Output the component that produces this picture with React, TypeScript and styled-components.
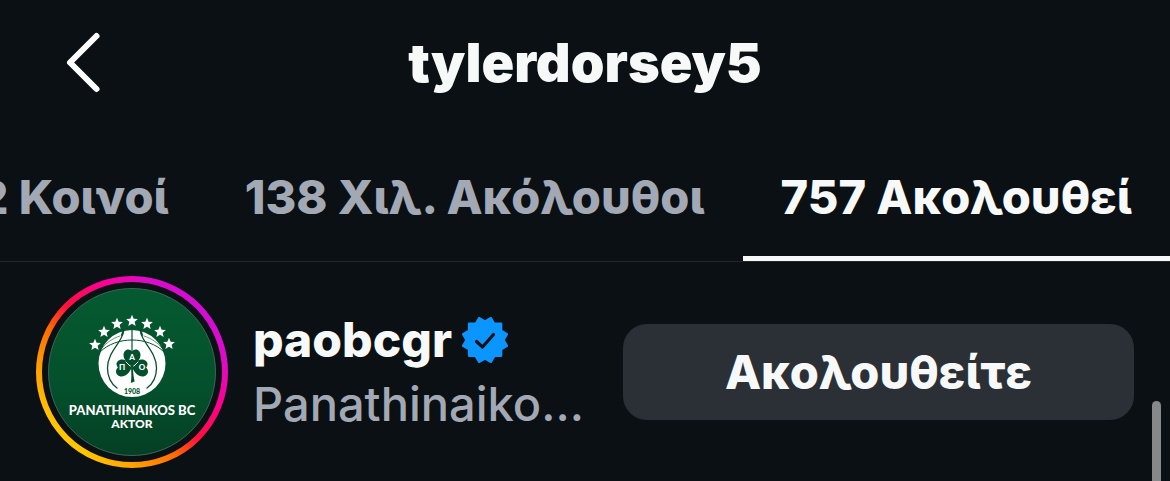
import React from "react";
import styled, { createGlobalStyle } from "styled-components";

const GlobalStyle = createGlobalStyle`
  *, *::before, *::after { box-sizing: border-box; }
  body {
    margin: 0;
    background: #0b1014;
    color: #f7f9f9;
    font-family: Inter, "Noto Sans", sans-serif;
    overflow: hidden;
  }
  button { font: inherit; color: inherit; border: 0; background: none; padding: 0; cursor: pointer; }
`;

const Screen = styled.main`
  position: relative;
  min-height: 100vh;
`;

const Header = styled.header`
  display: grid;
  grid-template-columns: 1fr auto 1fr;
  align-items: center;
  height: 126px;
  padding: 0 52px;
`;

const BackButton = styled.button`
  display: flex;
  width: 64px;
  height: 64px;
`;

const Title = styled.h1`
  margin: 0;
  font-size: 54px;
  line-height: 64px;
  font-weight: 900;
`;

const Tabs = styled.nav`
  display: flex;
  justify-content: flex-end;
  height: 136px;
  overflow: hidden;
  border-bottom: 1px solid #23272b;
`;

const Tab = styled.button<{ $active?: boolean }>`
  flex: none;
  height: 135px;
  padding: 12px 38px 0;
  border-bottom: 5px solid ${(p) => (p.$active ? "#f7f9f9" : "transparent")};
  color: ${(p) => (p.$active ? "#f7f9f9" : "#a2a9b4")};
  font-size: 47px;
  line-height: 56px;
  font-weight: 800;
  white-space: nowrap;
`;

const AccountRow = styled.article`
  display: flex;
  align-items: center;
  padding: 14px 36px 12px;
`;

const AvatarLink = styled.a`
  display: block;
  flex: none;
  width: 192px;
  height: 192px;
`;

const Info = styled.div`
  flex: 1;
  min-width: 0;
  padding: 0 36px 0 25px;
`;

const NameLine = styled.div`
  display: flex;
  align-items: center;
  gap: 10px;
`;

const Username = styled.a`
  color: inherit;
  text-decoration: none;
  font-size: 48px;
  line-height: 64px;
  font-weight: 800;
`;

const FullName = styled.p`
  margin: 0;
  color: #a2a9b4;
  font-size: 47px;
  line-height: 64px;
  font-weight: 500;
  overflow: hidden;
  white-space: nowrap;
`;

const FollowButton = styled.button`
  flex: 0 1 511px;
  height: 96px;
  padding-bottom: 2px;
  border-radius: 24px;
  background: #2b2f36;
  font-size: 47px;
  font-weight: 800;
`;

const ScrollThumb = styled.div`
  position: absolute;
  right: 9px;
  top: 401px;
  bottom: 0;
  width: 9px;
  border-radius: 5px 5px 0 0;
  background: #87888a;
`;

function starPoints(cx: number, cy: number, outer: number, inner: number) {
  return Array.from({ length: 10 }, (_, i) => {
    const r = i % 2 ? inner : outer;
    const a = (Math.PI * i) / 5 - Math.PI / 2;
    return `${(cx + r * Math.cos(a)).toFixed(2)},${(cy + r * Math.sin(a)).toFixed(2)}`;
  }).join(" ");
}

const stars = [[59, 69], [68, 56], [81, 48], [96, 45], [111, 48], [124, 56], [133, 68]];

function ClubAvatar() {
  return (
    <svg width="192" height="192" viewBox="0 0 192 192" role="img" aria-label="paobcgr">
      <defs>
        <linearGradient id="ring" x1="0.12" y1="0.88" x2="0.88" y2="0.12">
          <stop offset="0" stopColor="#ffd000" />
          <stop offset="0.22" stopColor="#ff9500" />
          <stop offset="0.36" stopColor="#ff6a00" />
          <stop offset="0.5" stopColor="#ff0f3c" />
          <stop offset="0.7" stopColor="#ff0090" />
          <stop offset="0.88" stopColor="#dc0cc8" />
          <stop offset="1" stopColor="#d20cd6" />
        </linearGradient>
        <linearGradient id="field" x1="0" y1="0" x2="0" y2="1">
          <stop offset="0" stopColor="#055a31" />
          <stop offset="0.6" stopColor="#04502c" />
          <stop offset="1" stopColor="#043f24" />
        </linearGradient>
      </defs>
      <circle cx="96" cy="96" r="93" fill="none" stroke="url(#ring)" strokeWidth="6" />
      <circle cx="96" cy="96" r="83.5" fill="url(#field)" stroke="#3c6650" strokeWidth="1" />
      {stars.map(([x, y]) => (
        <polygon key={x} points={starPoints(x, y, 6.2, 2.8)} fill="#fff" />
      ))}
      <circle cx="96" cy="87.5" r="33.5" fill="#fff" />
      <g fill="none" stroke="#04502c" strokeLinecap="round">
        <path d="M96 53.500V76" strokeWidth="1.200" />
        <path d="M87 57C86 66 71.500 76 71.500 92c0 9 4 16 9.500 20" strokeWidth="1.300" />
        <path d="M105 57c1 9 15.500 19 15.500 35 0 9-4 16-9.500 20" strokeWidth="1.300" />
        <path d="M87.500 54.500 86 59M104.500 54.500 106 59" strokeWidth="2" />
        <path d="M64 76c8-8 20-12 32-12s24 4 32 12" strokeWidth="1" />
        <path d="M84 60c-7 2-14 7-18 12M108 60c7 2 14 7 18 12" strokeWidth=".6" />
      </g>
      <g fill="#04502c">
        <path d="M96 91c-4-4-8.500-7-8.500-12 0-3 2-5.500 4.700-5.500 1.600 0 2.900.7 3.800 2 .9-1.300 2.200-2 3.800-2 2.700 0 4.700 2.500 4.700 5.500C104.500 84 100 87 96 91Z" />
        <path d="M95.500 92c-2-4.500-4.500-8.500-9-8.500-3.200 0-6 2-6 4.500 0 1.300.500 2.500 1.500 3.500-1.200 1-2 2.300-2 4 0 2.700 2.500 5 5.500 5 4.500 0 8-4 10-8.500Z" />
        <path d="M96.500 92c2-4.500 4.500-8.500 9-8.500 3.200 0 6 2 6 4.500 0 1.300-.5 2.500-1.500 3.500 1.200 1 2 2.300 2 4 0 2.700-2.500 5-5.500 5-4.500 0-8-4-10-8.500Z" />
        <path d="M95 90h2c0 6 .4 10 1.600 15.500l-3.800 1.500c.8-5 .6-10 .2-17Z" />
      </g>
      <path d="m90 86 4 4M102 86l-4 4" fill="none" stroke="#fff" strokeWidth="1" strokeLinecap="round" />
      <g fill="#fff" fontFamily="Lato, sans-serif" fontWeight="900" textAnchor="middle">
        <text x="96" y="84" fontSize="8">Α</text>
        <text x="86" y="94" fontSize="8">Π</text>
        <text x="106" y="94" fontSize="8">Ο</text>
        <text x="96" y="118" fontSize="7" fill="#04502c">1908</text>
        <text x="96" y="139" fontSize="13">PANATHINAIKOS BC</text>
        <text x="96" y="152" fontSize="12">AKTOR</text>
      </g>
    </svg>
  );
}

function VerifiedBadge() {
  return (
    <svg width="46" height="46" viewBox="0 0 46 46" role="img" aria-label="Επαληθευμένος">
      <path
        transform="translate(1 1) scale(1.1)"
        d="M19.998 3.094 14.638 0l-2.972 5.150H5.432v6.354L0 14.640 3.094 20 0 25.359l5.432 3.137v5.905h5.975L14.638 40l5.360-3.094L25.358 40l3.232-5.600h6.162v-6.010L40 25.359 36.905 20 40 14.641l-5.248-3.030v-6.460h-6.419L25.358 0l-5.360 3.094Z"
        fill="#0a95ff"
        stroke="#0a95ff"
        strokeWidth="2"
        strokeLinejoin="round"
      />
      <path d="m14.500 24.500 6 5.500 11-12.500" fill="none" stroke="#0b1014" strokeWidth="3.200" strokeLinecap="round" strokeLinejoin="round" />
    </svg>
  );
}

export default function App() {
  return (
    <>
      <GlobalStyle />
      <Screen>
        <Header>
          <BackButton aria-label="Πίσω">
            <svg width="64" height="64" viewBox="0 0 64 64" fill="none" stroke="#fff" strokeWidth="6" strokeLinecap="round" strokeLinejoin="round">
              <path d="M44.500 5 18 31.500 44.500 58" />
            </svg>
          </BackButton>
          <Title>tylerdorsey5</Title>
        </Header>
        <Tabs>
          <Tab>2 Κοινοί</Tab>
          <Tab>138 Χιλ. Ακόλουθοι</Tab>
          <Tab $active aria-current="page">757 Ακολουθεί</Tab>
        </Tabs>
        <AccountRow>
          <AvatarLink href="#paobcgr"><ClubAvatar /></AvatarLink>
          <Info>
            <NameLine>
              <Username href="#paobcgr">paobcgr</Username>
              <VerifiedBadge />
            </NameLine>
            <FullName>Panathinaiko...</FullName>
          </Info>
          <FollowButton>Ακολουθείτε</FollowButton>
        </AccountRow>
        <ScrollThumb />
      </Screen>
    </>
  );
}
